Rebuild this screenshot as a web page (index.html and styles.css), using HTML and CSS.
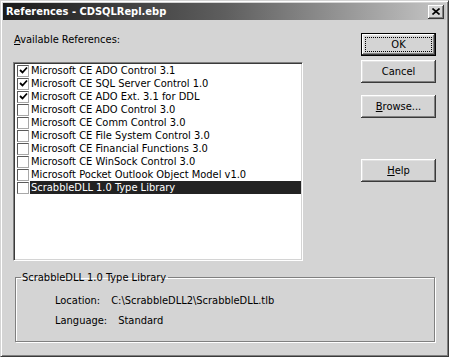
FILE: index.html
```html
<!DOCTYPE html>
<html lang="en">
<head>
  <meta charset="UTF-8" />
  <title>References - CDSQLRepl.ebp</title>
  <link rel="stylesheet" href="styles.css">
</head>
<body>
  <div class="window">
    <div class="titlebar">
      <span class="title">References - CDSQLRepl.ebp</span>
      <span class="close-btn">
        <svg width="8" height="7" viewBox="0 0 8 7">
          <path d="M0.5 0.5 L7.5 6.5 M7.5 0.5 L0.5 6.5" stroke="#000" stroke-width="1.6" fill="none"/>
        </svg>
      </span>
    </div>

    <div class="dialog">
      <div class="main">
        <div class="left">
          <div class="label"><u>A</u>vailable References:</div>
          <ul class="ref-list">
            <li class="ref-item"><span class="checkbox checked"><svg width="9" height="9" viewBox="0 0 9 9"><path d="M1 4 L3.5 6.5 L8 1.5" stroke="#000" stroke-width="1.8" fill="none"/></svg></span><span class="ref-name">Microsoft CE ADO Control 3.1</span></li>
            <li class="ref-item"><span class="checkbox checked"><svg width="9" height="9" viewBox="0 0 9 9"><path d="M1 4 L3.5 6.5 L8 1.5" stroke="#000" stroke-width="1.8" fill="none"/></svg></span><span class="ref-name">Microsoft CE SQL Server Control 1.0</span></li>
            <li class="ref-item"><span class="checkbox checked"><svg width="9" height="9" viewBox="0 0 9 9"><path d="M1 4 L3.5 6.5 L8 1.5" stroke="#000" stroke-width="1.8" fill="none"/></svg></span><span class="ref-name">Microsoft CE ADO Ext. 3.1 for DDL</span></li>
            <li class="ref-item"><span class="checkbox"></span><span class="ref-name">Microsoft CE ADO Control 3.0</span></li>
            <li class="ref-item"><span class="checkbox"></span><span class="ref-name">Microsoft CE Comm Control 3.0</span></li>
            <li class="ref-item"><span class="checkbox"></span><span class="ref-name">Microsoft CE File System Control 3.0</span></li>
            <li class="ref-item"><span class="checkbox"></span><span class="ref-name">Microsoft CE Financial Functions 3.0</span></li>
            <li class="ref-item"><span class="checkbox"></span><span class="ref-name">Microsoft CE WinSock Control 3.0</span></li>
            <li class="ref-item"><span class="checkbox"></span><span class="ref-name">Microsoft Pocket Outlook Object Model v1.0</span></li>
            <li class="ref-item selected"><span class="checkbox"></span><span class="ref-name">ScrabbleDLL 1.0 Type Library</span></li>
          </ul>
        </div>

        <div class="buttons">
          <button class="btn btn-default"><span class="focus-ring">OK</span></button>
          <button class="btn btn-cancel">Cancel</button>
          <button class="btn btn-browse"><u>B</u>rowse...</button>
          <button class="btn btn-help"><u>H</u>elp</button>
        </div>
      </div>

      <fieldset class="group">
        <legend>ScrabbleDLL 1.0 Type Library</legend>
        <div class="info-row"><span>Location:</span><span>C:\ScrabbleDLL2\ScrabbleDLL.tlb</span></div>
        <div class="info-row"><span>Language:</span><span>Standard</span></div>
      </fieldset>
    </div>
  </div>
</body>
</html>
```

FILE: styles.css
```css
* {
  margin: 0;
  padding: 0;
  box-sizing: border-box;
}

body {
  font-family: "DejaVu Sans Condensed", "DejaVu Sans", sans-serif;
  font-size: 11px;
  line-height: 13px;
  color: #000;
  background: #d4d4d4;
}

.window {
  width: 449px;
  height: 357px;
  background: #d4d4d4;
  border: 1px solid;
  border-color: #d4d4d4 #3a3a3a #3a3a3a #d4d4d4;
  box-shadow: inset 1px 1px #fff, inset -1px -1px #808080;
  padding: 2px;
}

/* Title bar */
.titlebar {
  height: 17px;
  display: flex;
  align-items: center;
  justify-content: space-between;
  padding: 0 2px 0 3px;
  background: linear-gradient(to right, #1a1a1a 0%, #5e5e5e 50%, #c6c6c6 100%);
}

.title {
  color: #fff;
  font-weight: bold;
}

.close-btn {
  width: 16px;
  height: 14px;
  display: flex;
  align-items: center;
  justify-content: center;
  background: #d4d4d4;
  box-shadow: inset -1px -1px #3a3a3a, inset 1px 1px #fff, inset -2px -2px #808080;
}

/* Dialog body */
.dialog {
  padding: 13px 10px 0 10px;
}

.main {
  display: flex;
}

.left {
  width: 290px;
}

.label {
  padding-left: 1px;
  margin-bottom: 16px;
}

.ref-list {
  list-style: none;
  height: 199px;
  background: #fff;
  border: 1px solid;
  border-color: #808080 #fff #fff #808080;
  box-shadow: inset 1px 1px #3a3a3a, inset -1px -1px #d4d4d4;
  padding: 1px 1px 0 0;
}

.ref-item {
  height: 13px;
  display: flex;
  align-items: center;
  white-space: nowrap;
}

.checkbox {
  width: 12px;
  height: 12px;
  flex: none;
  margin-left: 3px;
  margin-right: 1px;
  display: flex;
  align-items: center;
  justify-content: center;
  background: #fff;
  border: 1px solid;
  border-color: #5a5a5a #a8a8a8 #a8a8a8 #5a5a5a;
}

.ref-name {
  flex: 1;
  height: 13px;
  padding-left: 1px;
}

.selected .ref-name {
  background: #222;
  color: #fff;
}

/* Buttons */
.buttons {
  margin-left: 58px;
  display: flex;
  flex-direction: column;
}

.btn {
  width: 75px;
  height: 23px;
  font: inherit;
  color: #000;
  background: #d4d4d4;
  border: none;
  box-shadow: inset -1px -1px #3a3a3a, inset 1px 1px #fff, inset -2px -2px #808080, inset 2px 2px #e2e2e2;
  display: flex;
  align-items: center;
  justify-content: center;
}

.btn-default {
  border: 1px solid #000;
  padding: 3px;
}

.focus-ring {
  width: 100%;
  height: 100%;
  border: 1px dotted #000;
  display: flex;
  align-items: center;
  justify-content: center;
}

.btn-cancel { margin-top: 4px; }
.btn-browse { margin-top: 12px; }
.btn-help { margin-top: 41px; }

/* Info group */
.group {
  margin: 10px 0 0 2px;
  width: 420px;
  border: 1px solid #808080;
  box-shadow: 1px 1px 0 #fff, inset 1px 1px 0 #fff;
  padding: 10px 0 14px 0;
  min-width: 0;
}

.group legend {
  margin-left: 5px;
  padding: 0 2px 0 1px;
}

.info-row {
  display: flex;
  gap: 11px;
  padding-left: 39px;
}

.info-row + .info-row {
  margin-top: 7px;
}
```
